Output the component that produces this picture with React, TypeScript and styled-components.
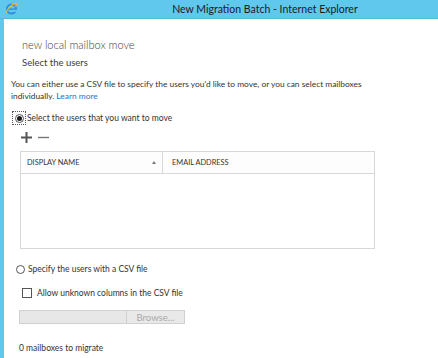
import React from 'react'
import styled, { createGlobalStyle } from 'styled-components'

const GlobalStyle = createGlobalStyle`
  html, body {
    margin: 0;
    padding: 0;
    background: #ffffff;
  }
  body {
    font-family: Lato, "Open Sans", sans-serif;
    color: #333333;
  }
`

const Window = styled.div`
  width: 438px;
  height: 358px;
  display: flex;
  flex-direction: column;
  overflow: hidden;
  background: #5fc8ec;
`

const TitleBar = styled.div`
  height: 18px;
  display: flex;
  align-items: center;
  position: relative;
  border-bottom: 1px solid #58b8d8;
`

const TitleText = styled.div`
  flex: 1;
  text-align: center;
  padding-left: 92px;
  font-size: 10.5px;
  color: #1c1c1c;
`

const Logo = styled.svg`
  position: absolute;
  left: 5px;
  top: 2px;
`

const Frame = styled.div`
  flex: 1;
  display: flex;
  padding-left: 4px;
`

const Content = styled.div`
  flex: 1;
  background: #ffffff;
  padding: 17px 0 0 7px;
  display: flex;
  flex-direction: column;
`

const Heading = styled.div`
  font-size: 11px;
  font-weight: 300;
  color: #3a3a3a;
  margin-left: 11px;
  line-height: 18px;
`

const SubHeading = styled.div`
  font-size: 9.5px;
  color: #3a3a3a;
  margin-left: 11px;
  line-height: 17px;
`

const Para = styled.p`
  margin: 7px 0 0;
  font-size: 8.4px;
  line-height: 12px;
  color: #333;
`

const Link = styled.a`
  color: #1a78c2;
  text-decoration: none;
`

const OptionRow = styled.label<{ $indent: number; $top: number }>`
  display: flex;
  align-items: center;
  gap: 1px;
  margin-left: ${p => p.$indent}px;
  margin-top: ${p => p.$top}px;
  font-size: 8.5px;
  color: #333;
  height: 14px;
`

const RadioWrap = styled.span<{ $focus?: boolean }>`
  width: 14px;
  height: 14px;
  display: flex;
  align-items: center;
  justify-content: center;
  box-sizing: border-box;
  border: 1px dotted ${p => (p.$focus ? '#555' : 'transparent')};
`

const RadioDot = styled.span<{ $on?: boolean }>`
  width: 9px;
  height: 9px;
  box-sizing: border-box;
  border-radius: 50%;
  border: 1px solid #555;
  background: #fff;
  display: flex;
  align-items: center;
  justify-content: center;
  &::after {
    content: '';
    width: 5px;
    height: 5px;
    border-radius: 50%;
    background: ${p => (p.$on ? '#1a1a1a' : 'transparent')};
  }
`

const Check = styled.span`
  width: 8px;
  height: 8px;
  border: 1px solid #555;
  margin-right: 4px;
`

const Toolbar = styled.div`
  display: flex;
  gap: 6px;
  margin: 6px 0 0 10px;
  height: 12px;
  align-items: center;
`

const Table = styled.div`
  margin: 8px 0 0 9px;
  width: 355px;
  height: 98px;
  box-sizing: border-box;
  border: 1px solid #d8d8d8;
  display: flex;
  flex-direction: column;
`

const HeaderRow = styled.div`
  display: grid;
  grid-template-columns: 142px 1fr;
  height: 21px;
  border-bottom: 1px solid #d8d8d8;
  background: #fdfdfd;
`

const HeaderCell = styled.div<{ $last?: boolean }>`
  display: flex;
  align-items: center;
  justify-content: space-between;
  padding: 0 5px 0 6px;
  font-size: 7.4px;
  color: #333;
  border-right: ${p => (p.$last ? 'none' : '1px solid #d8d8d8')};
  padding-left: ${p => (p.$last ? '9px' : '6px')};
`

const SortArrow = styled.span`
  width: 0;
  height: 0;
  border-left: 2.5px solid transparent;
  border-right: 2.5px solid transparent;
  border-bottom: 3px solid #777;
  margin-right: 1px;
`

const FileRow = styled.div`
  display: flex;
  margin: 10px 0 0 8px;
  height: 14px;
`

const FileInput = styled.div`
  width: 106px;
  background: #e7e7e7;
  border: 1px solid #d0d0d0;
  border-right: none;
`

const BrowseButton = styled.div`
  width: 57px;
  background: #e9e9e9;
  border: 1px solid #d0d0d0;
  color: #a8a8a8;
  font-size: 9.5px;
  display: flex;
  align-items: center;
  justify-content: center;
`

const Footer = styled.div`
  margin: 17px 0 0 8px;
  font-size: 8.5px;
  line-height: 14px;
  color: #333;
`

const IeLogo = () => (
  <Logo width="13" height="13" viewBox="0 0 13 13">
    <circle cx="6.5" cy="7" r="4.5" fill="none" stroke="#2f8fd8" strokeWidth="2" />
    <rect x="3" y="6.4" width="7" height="1.4" fill="#2f8fd8" />
    <rect x="8" y="7.8" width="4" height="2" fill="#5fc8ec" />
    <path d="M1 10.5 C 3 5, 9 1, 12 1.5 C 12.8 2.5, 11 4, 10 4.5" fill="none" stroke="#f2b521" strokeWidth="1.2" />
  </Logo>
)

const PlusMinus = () => (
  <>
    <svg width="11" height="11" viewBox="0 0 11 11">
      <rect x="0" y="4.5" width="11" height="2" fill="#555" />
      <rect x="4.5" y="0" width="2" height="11" fill="#555" />
    </svg>
    <svg width="11" height="11" viewBox="0 0 11 11">
      <rect x="0" y="4.8" width="11" height="1.4" fill="#777" />
    </svg>
  </>
)

export default function App() {
  return (
    <>
      <GlobalStyle />
      <Window>
        <TitleBar>
          <IeLogo />
          <TitleText>New Migration Batch - Internet Explorer</TitleText>
        </TitleBar>
        <Frame>
          <Content>
            <Heading>new local mailbox move</Heading>
            <SubHeading>Select the users</SubHeading>
            <Para>
              You can either use a CSV file to specify the users you'd like to move, or you can select mailboxes
              <br />
              individually. <Link href="#">Learn more</Link>
            </Para>
            <OptionRow $indent={1} $top={9}>
              <RadioWrap $focus>
                <RadioDot $on />
              </RadioWrap>
              Select the users that you want to move
            </OptionRow>
            <Toolbar>
              <PlusMinus />
            </Toolbar>
            <Table>
              <HeaderRow>
                <HeaderCell>
                  DISPLAY NAME
                  <SortArrow />
                </HeaderCell>
                <HeaderCell $last>EMAIL ADDRESS</HeaderCell>
              </HeaderRow>
            </Table>
            <OptionRow $indent={2} $top={13}>
              <RadioWrap>
                <RadioDot />
              </RadioWrap>
              Specify the users with a CSV file
            </OptionRow>
            <OptionRow $indent={11} $top={10}>
              <Check />
              Allow unknown columns in the CSV file
            </OptionRow>
            <FileRow>
              <FileInput />
              <BrowseButton>Browse...</BrowseButton>
            </FileRow>
            <Footer>0 mailboxes to migrate</Footer>
          </Content>
        </Frame>
      </Window>
    </>
  )
}
